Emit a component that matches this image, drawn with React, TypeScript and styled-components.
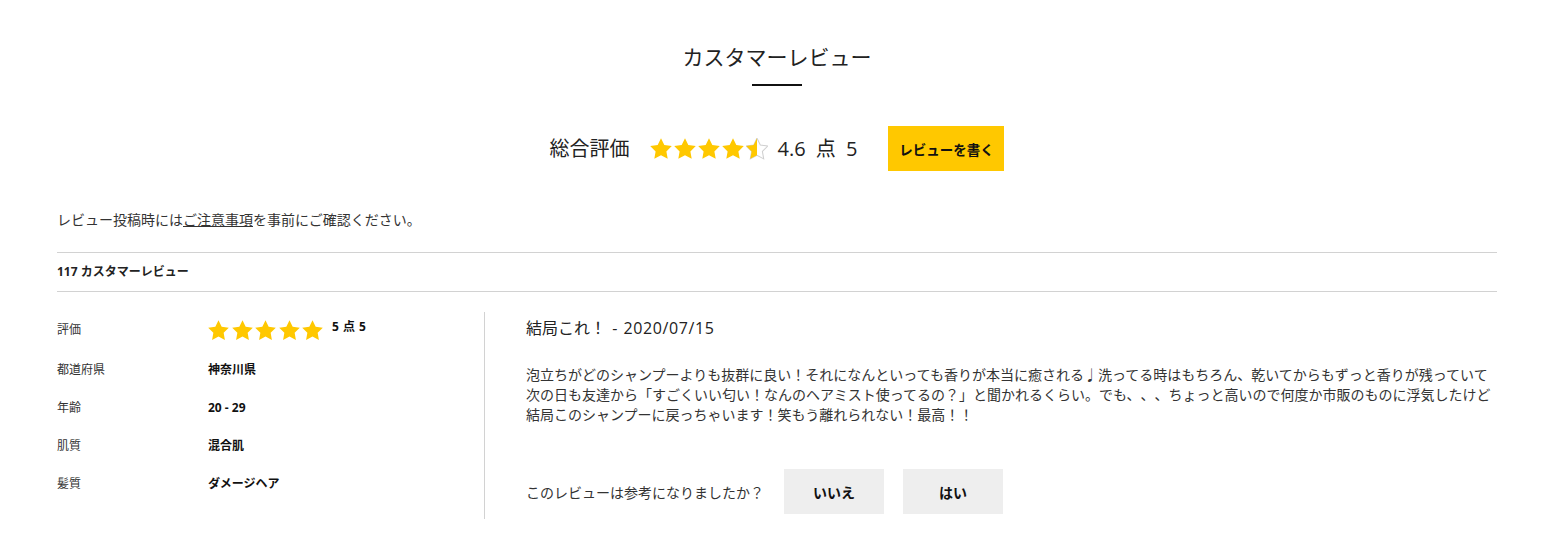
import React from "react";
import styled, { createGlobalStyle } from "styled-components";

const Global = createGlobalStyle`
  html, body { margin: 0; padding: 0; background: #fff; }
  body {
    font-family: "Open Sans", "Noto Sans CJK JP", sans-serif;
    color: #333;
    text-spacing-trim: space-all;
  }
  * { box-sizing: border-box; }
`;

const Page = styled.div`
  padding: 0 46px 0 57px;
`;

const Header = styled.header`
  display: flex;
  flex-direction: column;
  align-items: center;
  padding-top: 42px;
`;

const Title = styled.h2`
  margin: 0;
  font-size: 21px;
  line-height: 30px;
  font-weight: 400;
  color: #222;
`;

const TitleRule = styled.div`
  width: 50px;
  height: 2px;
  background: #111;
  margin-top: 12px;
`;

const Summary = styled.div`
  display: flex;
  align-items: center;
  margin-top: 40px;
`;

const SummaryLabel = styled.span`
  font-size: 20px;
  line-height: 24px;
  color: #222;
  margin-right: 20px;
`;

const Score = styled.span`
  font-size: 20px;
  line-height: 24px;
  color: #222;
  margin-left: 10px;
  margin-right: 31px;
  word-spacing: 5px;
`;

const WriteButton = styled.button`
  width: 116px;
  height: 45px;
  border: none;
  background: #ffc800;
  font-family: inherit;
  font-size: 13.5px;
  font-weight: 700;
  color: #111;
  cursor: pointer;
  padding: 0;
`;

const Notice = styled.p`
  margin: 39px 0 0;
  font-size: 14px;
  line-height: 20px;
  color: #333;
  a { color: inherit; text-decoration: underline; }
`;

const CountBar = styled.div`
  margin-top: 22px;
  border-top: 1px solid #d2d2d2;
  border-bottom: 1px solid #d2d2d2;
  padding: 10px 0;
  font-size: 12px;
  line-height: 18px;
  font-weight: 700;
  color: #222;
`;

const Review = styled.section`
  display: flex;
  padding: 20px 0 0;
`;

const Profile = styled.div`
  width: 428px;
  flex-shrink: 0;
  border-right: 1px solid #d2d2d2;
  padding-top: 6px;
  display: flex;
  flex-direction: column;
  gap: 18px;
`;

const ProfileRow = styled.div<{ $tall?: boolean }>`
  display: grid;
  grid-template-columns: 151px 1fr;
  align-items: center;
  min-height: ${(p) => (p.$tall ? "24px" : "20px")};
  font-size: 12px;
  line-height: 20px;
`;

const ProfileLabel = styled.span`
  color: #333;
`;

const ProfileValue = styled.span`
  font-weight: 700;
  color: #111;
  display: flex;
  align-items: center;
`;

const SmallScore = styled.span`
  margin-left: 9px;
  font-size: 12px;
  font-weight: 700;
  word-spacing: 1px;
  position: relative;
  top: -3px;
`;

const StarRow = styled.span<{ $gap: number }>`
  display: inline-flex;
  gap: ${(p) => p.$gap}px;
`;

const Body = styled.div`
  flex: 1;
  padding: 4px 0 5px 41px;
`;

const ReviewTitle = styled.h3`
  margin: 0;
  font-size: 16px;
  line-height: 24px;
  font-weight: 400;
  color: #222;
  word-spacing: 2px;
`;

const ReviewDate = styled.span`
  letter-spacing: 0.6px;
`;

const ReviewText = styled.p`
  margin: 25px 0 0;
  font-size: 14px;
  line-height: 20px;
  color: #333;
`;

const Helpful = styled.div`
  display: flex;
  align-items: center;
  margin-top: 44px;
`;

const HelpfulLabel = styled.span`
  font-size: 14px;
  color: #333;
  margin-right: 20px;
`;

const VoteButton = styled.button`
  width: 100px;
  height: 45px;
  border: none;
  background: #eeeeee;
  font-family: inherit;
  font-size: 14px;
  font-weight: 700;
  color: #111;
  margin-right: 19px;
  padding: 0;
  cursor: pointer;
`;

const STAR =
  "M12 1.6l3.2 6.6 7.2 1-5.2 5.1 1.25 7.2L12 18.1l-6.45 3.4 1.25-7.2L1.6 9.2l7.2-1z";

let starId = 0;
function Star({ size, fill }: { size: number; fill: number }) {
  const id = React.useMemo(() => `half${starId++}`, []);
  return (
    <svg width={size} height={size} viewBox="1.4 1.4 21.2 21.2">
      {fill >= 1 ? (
        <path d={STAR} fill="#ffc800" />
      ) : (
        <>
          <defs>
            <clipPath id={id}>
              <rect x="0" y="0" width={12} height="24" />
            </clipPath>
          </defs>
          <path d={STAR} fill="none" stroke="#cfcfcf" strokeWidth="1" />
          <path d={STAR} fill="#ffc800" clipPath={`url(#${id})`} />
        </>
      )}
    </svg>
  );
}

function Stars({ value, size, gap }: { value: number; size: number; gap: number }) {
  return (
    <StarRow $gap={gap}>
      {[0, 1, 2, 3, 4].map((i) => (
        <Star key={i} size={size} fill={value - i >= 0.75 ? 1 : 0.5} />
      ))}
    </StarRow>
  );
}

export default function App() {
  return (
    <>
      <Global />
      <Page>
        <Header>
          <Title>カスタマーレビュー</Title>
          <TitleRule />
          <Summary>
            <SummaryLabel>総合評価</SummaryLabel>
            <Stars value={4.6} size={22} gap={2} />
            <Score>4.6 点 5</Score>
            <WriteButton>レビューを書く</WriteButton>
          </Summary>
        </Header>
        <Notice>
          レビュー投稿時には<a href="#">ご注意事項</a>を事前にご確認ください。
        </Notice>
        <CountBar>117 カスタマーレビュー</CountBar>
        <Review>
          <Profile>
            <ProfileRow $tall>
              <ProfileLabel>評価</ProfileLabel>
              <ProfileValue>
                <Stars value={5} size={21} gap={2.5} />
                <SmallScore>5 点 5</SmallScore>
              </ProfileValue>
            </ProfileRow>
            <ProfileRow>
              <ProfileLabel>都道府県</ProfileLabel>
              <ProfileValue>神奈川県</ProfileValue>
            </ProfileRow>
            <ProfileRow>
              <ProfileLabel>年齢</ProfileLabel>
              <ProfileValue>20 - 29</ProfileValue>
            </ProfileRow>
            <ProfileRow>
              <ProfileLabel>肌質</ProfileLabel>
              <ProfileValue>混合肌</ProfileValue>
            </ProfileRow>
            <ProfileRow>
              <ProfileLabel>髪質</ProfileLabel>
              <ProfileValue>ダメージヘア</ProfileValue>
            </ProfileRow>
          </Profile>
          <Body>
            <ReviewTitle>
              結局これ！ - <ReviewDate>2020/07/15</ReviewDate>
            </ReviewTitle>
            <ReviewText>
              泡立ちがどのシャンプーよりも抜群に良い！それになんといっても香りが本当に癒される♩洗ってる時はもちろん、乾いてからもずっと香りが残っていて
              <br />
              次の日も友達から「すごくいい匂い！なんのヘアミスト使ってるの？」と聞かれるくらい。でも、、、ちょっと高いので何度か市販のものに浮気したけど
              <br />
              結局このシャンプーに戻っちゃいます！笑もう離れられない！最高！！
            </ReviewText>
            <Helpful>
              <HelpfulLabel>このレビューは参考になりましたか？</HelpfulLabel>
              <VoteButton>いいえ</VoteButton>
              <VoteButton>はい</VoteButton>
            </Helpful>
          </Body>
        </Review>
      </Page>
    </>
  );
}
